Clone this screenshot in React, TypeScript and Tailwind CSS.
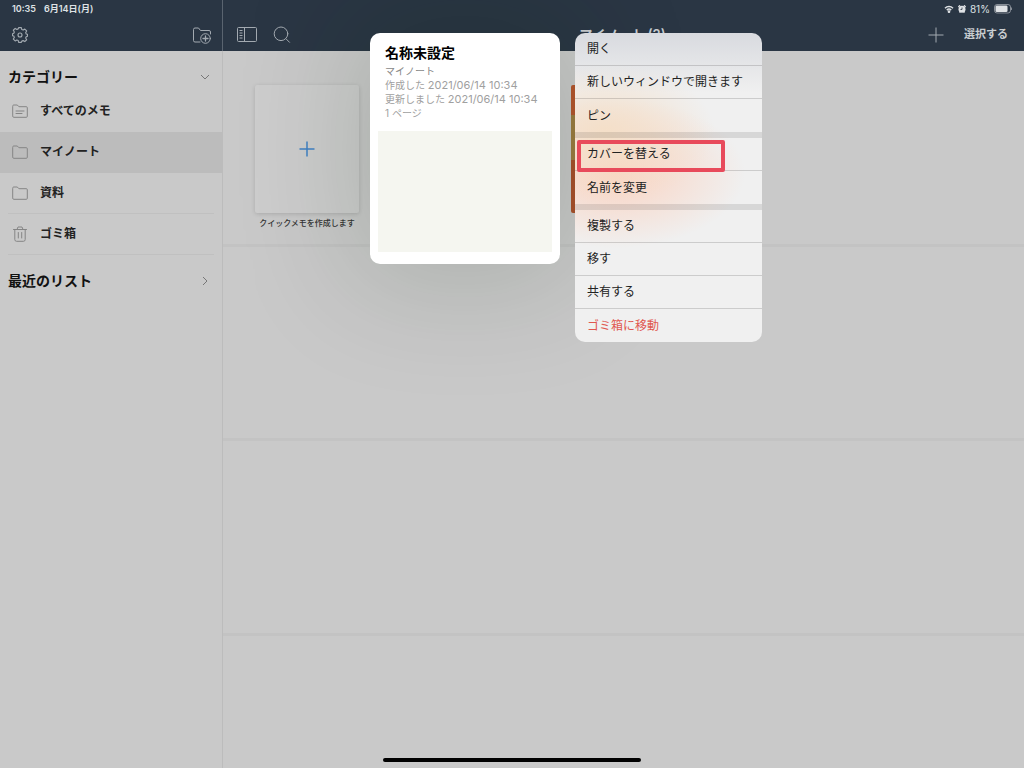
import React, { useState } from 'react';
import clsx from 'clsx';

type FolderIconKind = 'lines' | 'plain' | 'trash';

interface Category {
  id: string;
  label: string;
  icon: FolderIconKind;
}

const categories: Category[] = [
  { id: 'all', label: 'すべてのメモ', icon: 'lines' },
  { id: 'my', label: 'マイノート', icon: 'plain' },
  { id: 'docs', label: '資料', icon: 'plain' },
  { id: 'trash', label: 'ゴミ箱', icon: 'trash' },
];

const menuGroups = [
  ['開く', '新しいウィンドウで開きます', 'ピン'],
  ['カバーを替える', '名前を変更'],
  ['複製する', '移す', '共有する', 'ゴミ箱に移動'],
];

const HIGHLIGHTED = 'カバーを替える';
const DESTRUCTIVE = 'ゴミ箱に移動';

function GearIcon() {
  return (
    <svg className="h-4 w-4" viewBox="0 0 24 24" fill="none" stroke="currentColor" strokeWidth="1.7" strokeLinejoin="round">
      <path d="M10 1h4l.7 2.800 2 .8 2.500-1.500 2.800 2.800-1.500 2.500.8 2 1.900.6v3l-1.900.6-.8 2 1.500 2.500-2.800 2.800-2.500-1.500-2 .8L14 23h-4l-.7-2.800-2-.8-2.500 1.500L2 18.100l1.500-2.500-.8-2L.8 13v-3l1.900-.6.8-2L2 4.900 4.800 2.100l2.500 1.500 2-.8z" />
      <circle cx="12" cy="12" r="3" />
    </svg>
  );
}

function AddFolderIcon() {
  return (
    <svg className="h-[18px] w-5" viewBox="0 0 20 18" fill="none" stroke="currentColor" strokeLinecap="round" strokeLinejoin="round">
      <path d="M8 16H3a1.500 1.500 0 0 1-1.500-1.500v-11A1.500 1.500 0 0 1 3 2h3.500l2 2.500H17A1.500 1.500 0 0 1 18.500 6v2" />
      <circle cx="13.500" cy="12.500" r="4.800" />
      <path d="M13.500 10v5M11 12.500h5" strokeWidth="1.300" />
    </svg>
  );
}

function SidebarIcon() {
  return (
    <svg className="h-4 w-5" viewBox="0 0 20 16" fill="none" stroke="currentColor">
      <rect x="0.500" y="0.500" width="19" height="14" rx="1" />
      <path d="M7.500 0.500v14M2.500 3.500h3M2.500 6h3M2.500 8.500h3M2.500 11h3" />
    </svg>
  );
}

function SearchIcon() {
  return (
    <svg className="h-[18px] w-[18px]" viewBox="0 0 18 18" fill="none" stroke="currentColor" strokeLinecap="round">
      <circle cx="8" cy="7.800" r="6.800" />
      <path d="M13 12.800l3.500 3.500" />
    </svg>
  );
}

function PlusIcon({ className }: { className: string }) {
  return (
    <svg className={className} viewBox="0 0 16 16" fill="none" stroke="currentColor">
      <path d="M8 0.500v15M0.500 8h15" />
    </svg>
  );
}

function CategoryIcon({ kind }: { kind: FolderIconKind }) {
  if (kind === 'trash') {
    return (
      <svg className="h-4 w-4" viewBox="0 0 16 16" fill="none" stroke="currentColor" strokeLinecap="round" strokeLinejoin="round">
        <path d="M1.500 3.500h13M5 3.500L6 1h4l1 2.500M2.800 3.500v10A1.800 1.800 0 0 0 4.600 15.300h6.800a1.800 1.800 0 0 0 1.800-1.800v-10M6.300 6.500v5.500M9.700 6.500v5.500" />
      </svg>
    );
  }
  return (
    <svg className="h-4 w-4" viewBox="0 0 16 16" fill="none" stroke="currentColor" strokeLinecap="round" strokeLinejoin="round">
      <path d="M0.700 3A1 1 0 0 1 1.700 2h3.600l1.600 1.700h7.400a1 1 0 0 1 1 1v8.600a1 1 0 0 1-1 1H1.700a1 1 0 0 1-1-1z" />
      {kind === 'lines' && <path d="M4 8h8M4 10.500h6" />}
    </svg>
  );
}

function Chevron({ open }: { open: boolean }) {
  return (
    <svg className="h-2.5 w-2.5 text-[#777]" viewBox="0 0 10 10" fill="none" stroke="currentColor">
      <path d={open ? 'M1 3l4 4 4-4' : 'M3 1l4 4-4 4'} />
    </svg>
  );
}

function StatusIcons() {
  return (
    <div className="flex items-center gap-1 text-[10px] text-[#dfe2e5]">
      <svg className="h-2 w-2.5" viewBox="0 0 10 8" fill="none" stroke="currentColor" strokeWidth="1.500">
        <path d="M1 3.200a5.700 5.700 0 0 1 8 0M2.800 5.100a3.200 3.200 0 0 1 4.400 0" />
        <circle cx="5" cy="6.700" r="0.600" fill="currentColor" />
      </svg>
      <svg className="h-2 w-2" viewBox="0 0 8 8">
        <path d="M.3 2L2 .3M7.700 2L6 .3M1.500 7.500l1-1M6.500 7.500l-1-1" stroke="currentColor" strokeWidth="1.300" />
        <circle cx="4" cy="4.200" r="3.500" fill="currentColor" />
        <path d="M4 2.500v2H2.500" fill="none" stroke="#2a3644" strokeWidth="0.800" />
      </svg>
      <span>81%</span>
      <svg className="h-2.5 w-[18px]" viewBox="0 0 18 10" fill="none">
        <rect x="0.500" y="0.500" width="16" height="8.500" rx="2.500" stroke="currentColor" opacity="0.500" />
        <rect x="1.500" y="1.500" width="12" height="6.500" rx="1.300" fill="currentColor" />
        <path d="M17.500 3.500v2.500" stroke="currentColor" opacity="0.500" />
      </svg>
    </div>
  );
}

function Sidebar() {
  const [selected, setSelected] = useState('my');

  return (
    <aside className="flex w-[223px] shrink-0 flex-col border-r border-[#bcbcbc]">
      <header className="-mr-px flex h-[51px] flex-col border-r border-[#5a646f] bg-[#2a3644] text-[#a3aab1]">
        <div className="flex h-[18px] items-center gap-2 pl-3 text-[9px] font-semibold text-[#dfe2e5]">
          <span>10:35</span>
          <span>6月14日(月)</span>
        </div>
        <div className="flex flex-1 items-center justify-between pr-2.5 pl-3">
          <button type="button" aria-label="設定">
            <GearIcon />
          </button>
          <button type="button" aria-label="フォルダを追加">
            <AddFolderIcon />
          </button>
        </div>
      </header>

      <button type="button" className="flex h-10 items-center justify-between pt-3 pr-3 pl-2 text-sm font-bold text-[#111]">
        カテゴリー
        <Chevron open />
      </button>
      <ul>
        {categories.map((category) => (
          <li key={category.id} className={clsx(selected === category.id && 'bg-[#bcbcbc]')}>
            <button
              type="button"
              onClick={() => setSelected(category.id)}
              className="flex h-[41px] w-full px-2 text-xs font-semibold text-[#222]"
            >
              <span
                className={clsx(
                  'flex h-full flex-1 items-center gap-3 border-b pl-1',
                  selected === category.id || category.id === 'all' ? 'border-transparent' : 'border-[#c0c0c0]'
                )}
              >
                <span className="text-[#858585]">
                  <CategoryIcon kind={category.icon} />
                </span>
                {category.label}
              </span>
            </button>
          </li>
        ))}
      </ul>
      <button type="button" className="mt-1.5 flex h-10 items-center justify-between pr-3 pl-2 text-sm font-bold text-[#111]">
        最近のリスト
        <Chevron open={false} />
      </button>
    </aside>
  );
}

function NotePreview() {
  return (
    <section className="absolute top-[33px] left-[147px] w-[190px] rounded-[10px] bg-white px-2 pt-2.5 pb-3 shadow-[0_0_120px_20px_rgba(10,35,5,0.15)]">
      <div className="px-[7px] text-[10px] leading-[14px] text-[#a0a0a0]">
        <h2 className="mb-px text-sm leading-5 font-bold text-black">名称未設定</h2>
        <p className="text-[#888]">マイノート</p>
        <p>
          作成した <span className="text-[11px]">2021/06/14 10:34</span>
        </p>
        <p className="whitespace-nowrap">
          更新しました <span className="text-[11px]">2021/06/14 10:34</span>
        </p>
        <p>1 ページ</p>
      </div>
      <div className="mt-[11px] h-[121px] bg-[#f5f6f0]" />
    </section>
  );
}

function ContextMenu() {
  return (
    <div
      role="menu"
      className="absolute top-[33px] left-[352px] flex w-[187px] flex-col overflow-hidden rounded-[10px] bg-[#f0f0f0] bg-[linear-gradient(to_bottom,#d8dadf,#f0f0f000_60px),radial-gradient(ellipse_110px_70px_at_30px_100px,#f4dfc8,#f0f0f000),radial-gradient(ellipse_130px_75px_at_40px_140px,#fad2c0,#f0f0f000)]"
    >
      {menuGroups.map((group) => (
        <div key={group[0]} className="flex flex-col border-b-6 border-black/10 last:border-b-0">
          {group.map((item) => (
            <button
              key={item}
              type="button"
              role="menuitem"
              className={clsx(
                'relative flex h-[33px] items-center border-b border-black/15 px-3 text-xs last:border-b-0',
                item === DESTRUCTIVE ? 'text-[#e0574f]' : 'text-[#222]'
              )}
            >
              {item}
              {item === HIGHLIGHTED && (
                <span className="absolute top-0.5 left-0.5 h-8 w-[148px] rounded-xs border-4 border-[#e84a5b]" />
              )}
            </button>
          ))}
        </div>
      ))}
    </div>
  );
}

function Library() {
  return (
    <main className="relative flex flex-1 flex-col overflow-hidden">
      <header className="flex h-[51px] flex-col bg-[#2a3644] text-[#a3aab1]">
        <div className="flex h-[18px] items-center justify-end pr-3">
          <StatusIcons />
        </div>
        <div className="grid flex-1 grid-cols-3 items-center pr-4 pl-3.5">
          <div className="flex items-center gap-4">
            <button type="button" aria-label="サイドバー">
              <SidebarIcon />
            </button>
            <button type="button" aria-label="検索">
              <SearchIcon />
            </button>
          </div>
          <h1 className="text-center text-[13px] font-semibold text-[#c9cdd1]">マイノート (2)</h1>
          <div className="flex items-center justify-end gap-5">
            <button type="button" aria-label="追加">
              <PlusIcon className="h-4 w-4" />
            </button>
            <button type="button" className="text-[11px] font-semibold text-[#c9cdd1]">
              選択する
            </button>
          </div>
        </div>
      </header>

      <div className="flex h-[196px] items-start gap-[54px] border-b-3 border-[#c3c3c3] px-8 pt-[34px]">
        <button type="button" className="flex w-[104px] flex-col items-center gap-1 text-[#333]">
          <span className="flex h-32 w-full items-center justify-center rounded-xs bg-[#cdcdcd] text-[#3f80c4] shadow-[0_1px_4px_rgba(0,0,0,0.15)]">
            <PlusIcon className="h-4 w-4 stroke-[1.5]" />
          </span>
          <span className="text-[8px] leading-3 font-medium whitespace-nowrap">クイックメモを作成します</span>
        </button>
        <div className="h-32 w-[104px]" />
        {/* notebook cover */}
        <div className="flex h-32 w-[104px] flex-col overflow-hidden rounded-xs">
          <div className="h-[30px] bg-[#b5562e]" />
          <div className="h-[45px] bg-[#9c7c40]" />
          <div className="flex-1 bg-[#a9502c]" />
        </div>
      </div>
      <div className="h-[194px] border-b-3 border-[#c3c3c3]" />
      <div className="h-[195px] border-b-3 border-[#c3c3c3]" />

      <NotePreview />
      <ContextMenu />
    </main>
  );
}

export default function App() {
  return (
    <div className="relative flex min-h-screen bg-[#c9c9c9] font-['Inter','Noto_Sans_CJK_JP',sans-serif]">
      <Sidebar />
      <Library />
      {/* home indicator */}
      <div className="absolute bottom-1.5 left-1/2 h-1 w-[258px] -translate-x-1/2 rounded-full bg-black" />
    </div>
  );
}
